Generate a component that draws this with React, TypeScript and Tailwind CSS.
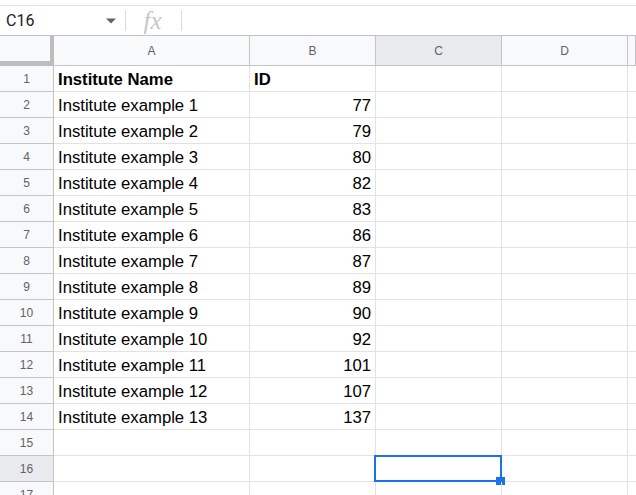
import React from "react";

// Sheet grid: one frozen header row, row numbers on the left, C16 selected.

const rows: [string, string][] = [
  ["Institute Name", "ID"],
  ["Institute example 1", "77"],
  ["Institute example 2", "79"],
  ["Institute example 3", "80"],
  ["Institute example 4", "82"],
  ["Institute example 5", "83"],
  ["Institute example 6", "86"],
  ["Institute example 7", "87"],
  ["Institute example 8", "89"],
  ["Institute example 9", "90"],
  ["Institute example 10", "92"],
  ["Institute example 11", "101"],
  ["Institute example 12", "107"],
  ["Institute example 13", "137"],
  ["", ""],
  ["", ""],
  ["", ""],
];

const cols = "grid grid-cols-[54px_196px_126px_126px_126px_1fr]";
const cell = "border-r border-b border-[#e2e2e3] h-[26px] flex items-center px-[4px] pt-[2px] overflow-hidden whitespace-nowrap";

function FormulaBar() {
  return (
    <div className="flex h-[31px] items-center border-t border-b border-t-[#e1e1e1] border-b-[#c4c4c4] bg-white">
      <div className="flex w-[125px] items-center pl-[6px] pr-[8px]">
        <span className="flex-1 text-[16px] text-[#202124] [font-family:Roboto,'Liberation_Sans',sans-serif]">
          C16
        </span>
        <svg width="10" height="6" viewBox="0 0 10 5" className="mr-[1px]">
          <path d="M0 0 L10 0 L5 5 Z" fill="#5f6368" />
        </svg>
      </div>
      <div className="h-[21px] w-px bg-[#dadce0]" />
      <div className="flex w-[55px] items-center justify-center pr-[2px]">
        <span className="text-[25px] italic leading-none text-[#c6c6c6] [font-family:'Liberation_Serif',serif]">
          fx
        </span>
      </div>
      <div className="h-[21px] w-px bg-[#dadce0]" />
    </div>
  );
}

export default function App() {
  const selectedRow = 16;
  return (
    <div className="h-[495px] w-[636px] overflow-hidden bg-white pt-[5px] [font-family:'Liberation_Sans',Arial,sans-serif]">
      <FormulaBar />

      {/* column header row */}
      <div className={`${cols} h-[30px] bg-[#f8f9fa] text-[12px] text-[#5f6368]`}>
        <div className="border-r-[4px] border-b-[5px] border-[#bdbdbd]" />
        {["A", "B", "C", "D", ""].map((c) => (
          <div
            key={c || "E"}
            className={`flex items-center justify-center border-r border-b border-[#c4c4c4] ${
              c === "C" ? "bg-[#e8eaed]" : ""
            }`}
          >
            {c}
          </div>
        ))}
      </div>

      {rows.map(([name, id], i) => {
        const n = i + 1;
        const bold = n === 1 ? "font-bold" : "";
        return (
          <div key={n} className={`${cols} text-[16.7px] text-black`}>
            <div
              className={`flex h-[26px] items-center justify-center border-r border-b border-r-[#c4c4c4] border-b-[#c4c4c4] text-[12px] text-[#5f6368] ${
                n === selectedRow ? "bg-[#e8eaed]" : "bg-[#f8f9fa]"
              }`}
            >
              {n}
            </div>
            <div className={`${cell} ${bold}`}>{name}</div>
            <div className={`${cell} ${bold} ${n === 1 ? "justify-start" : "justify-end"}`}>{id}</div>
            <div className={`${cell} relative overflow-visible`}>
              {n === selectedRow && (
                <>
                  <div className="absolute left-[-2px] top-[-1px] h-[27px] w-[128px] border-2 border-[#1a73e8]" />
                  <div className="absolute left-[120px] top-[21px] h-[8px] w-[9px] bg-[#1a73e8]" />
                </>
              )}
            </div>
            <div className={cell} />
            <div className={cell} />
          </div>
        );
      })}
    </div>
  );
}
